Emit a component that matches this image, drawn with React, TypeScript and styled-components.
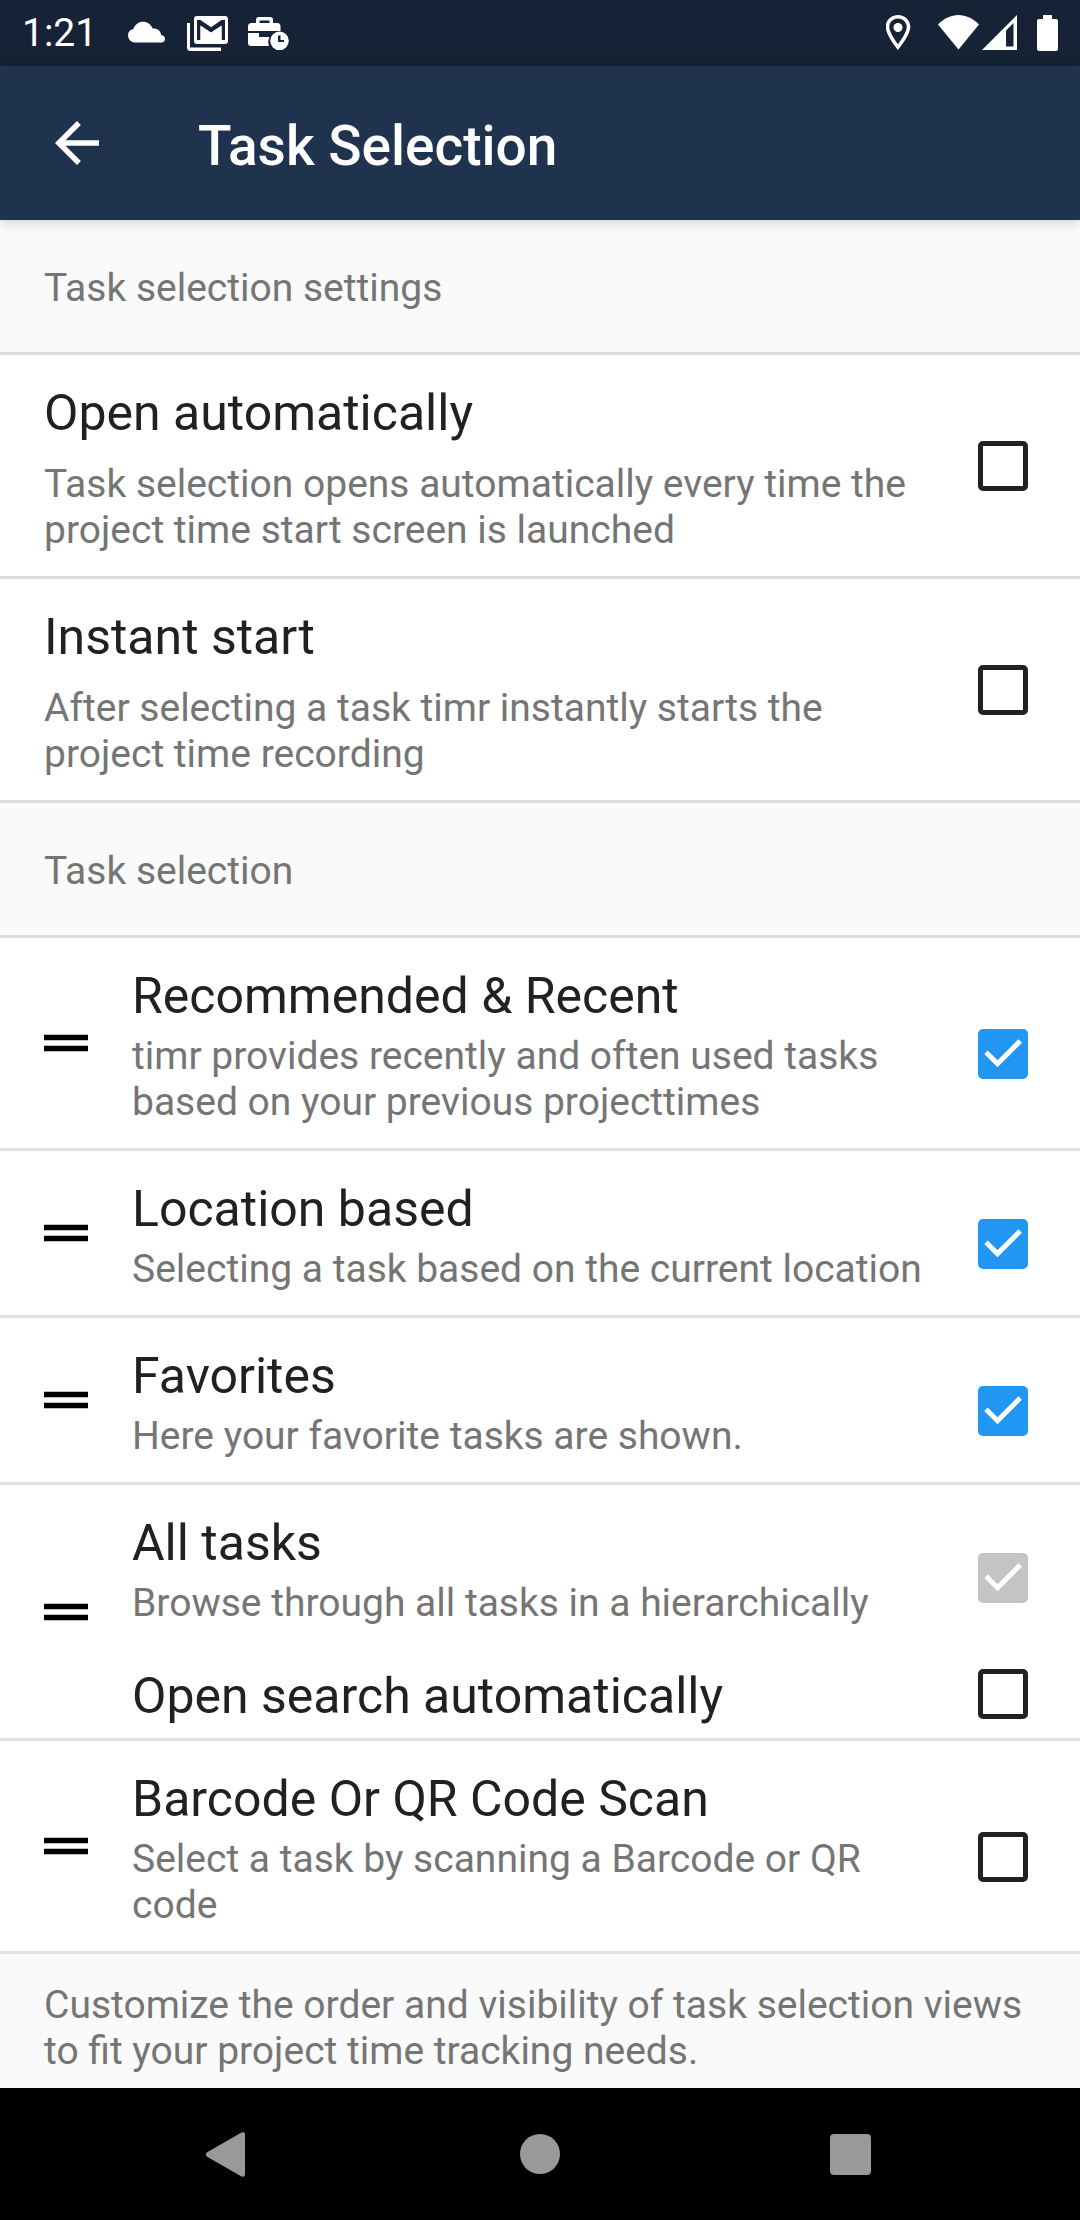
import React, { useState } from "react";
import styled, { createGlobalStyle, css } from "styled-components";

const GlobalStyle = createGlobalStyle`
  *, *::before, *::after { box-sizing: border-box; }
  body {
    margin: 0;
    background: #fafafa;
    font-family: Roboto, "Noto Sans", sans-serif;
    color: #212121;
  }
  h1, h2, p, ul { margin: 0; padding: 0; font-weight: 400; }
`;

const Screen = styled.div`
  display: flex;
  flex-direction: column;
  min-height: 100vh;
`;

const StatusBar = styled.div`
  display: flex;
  align-items: center;
  justify-content: space-between;
  height: 66px;
  padding: 0 22px;
  background: #162235;
  color: #fff;
`;

const IconGroup = styled.div<{ $gap: number }>`
  display: flex;
  align-items: center;
  gap: ${(p) => p.$gap}px;
`;

const Clock = styled.time`
  margin-right: 12px;
  font-size: 39px;
  line-height: 46px;
`;

const StatusSvg = styled.svg`
  display: block;
  height: 66px;
  fill: #fff;
`;

const AppBar = styled.header`
  position: relative;
  display: flex;
  align-items: center;
  gap: 88px;
  height: 154px;
  padding: 0 44px;
  background: #20334e;
  color: #fff;
  box-shadow: 0 2px 12px rgba(0, 0, 0, 0.18);
`;

const IconButton = styled.button`
  display: flex;
  align-items: center;
  justify-content: center;
  padding: 0;
  border: 0;
  background: none;
  color: inherit;
  cursor: pointer;
`;

const Icon = styled.svg`
  display: block;
  flex: none;
  width: 66px;
  height: 66px;
  fill: currentColor;
`;

const PageTitle = styled.h1`
  padding-top: 5px;
  font-size: 55px;
  line-height: 64px;
  && { font-weight: 500; }
`;

const Content = styled.main`
  flex: 1;
`;

const SectionTitle = styled.h2`
  padding: 45px 44px 41px;
  border-bottom: 3px solid #dcdcdc;
  font-size: 39px;
  line-height: 46px;
  color: #757575;
`;

const List = styled.ul`
  list-style: none;
  background: #fff;
`;

const Row = styled.li<{ $line: string }>`
  display: flex;
  align-items: center;
  padding-right: 33px;
  border-bottom: 3px solid ${(p) => p.$line};
`;

const Handle = styled(IconButton)`
  flex: none;
  padding: 0 33px;
  color: #000;
  cursor: grab;
`;

const Options = styled.div`
  flex: 1;
  min-width: 0;
`;

const Option = styled.div`
  display: flex;
  align-items: center;
`;

const Texts = styled.div<{ $inset?: boolean; $gap?: number; $compact?: boolean }>`
  display: flex;
  flex: 1;
  flex-direction: column;
  gap: ${(p) => p.$gap ?? 8}px;
  min-width: 0;
  padding: 29px 22px 23px 0;
  ${(p) => p.$inset && css`padding-left: 44px;`}
  ${(p) => p.$compact && css`padding-top: 18px; padding-bottom: 13px;`}
`;

const Title = styled.label`
  font-size: 50px;
  line-height: 58px;
`;

const Summary = styled.p`
  font-size: 39px;
  line-height: 46px;
  color: #757575;
`;

const CheckCell = styled.span<{ $lowered?: boolean }>`
  display: grid;
  flex: none;
  width: 88px;
  place-items: center;
  padding-top: ${(p) => (p.$lowered ? 22 : 0)}px;

  & > * { grid-area: 1 / 1; }
`;

const CheckInput = styled.input`
  appearance: none;
  width: 50px;
  height: 50px;
  margin: 0;
  border: 5px solid #212121;
  border-radius: 5px;
  background: #fff;

  &:checked {
    border-color: #2196f3;
    background: #2196f3;
  }
  &:checked:disabled {
    border-color: #c4c4c4;
    background: #c4c4c4;
  }
`;

const CheckMark = styled.svg`
  width: 50px;
  height: 50px;
  fill: none;
  stroke: #fff;
  stroke-width: 5;
  pointer-events: none;
`;

const Footnote = styled(Summary)`
  padding: 28px 44px 14px;
`;

const NavBar = styled.nav`
  display: grid;
  grid-template-columns: repeat(3, 1fr);
  height: 132px;
  padding: 0 75px;
  background: #000;
  color: #999;
`;

type CheckProps = {
  id: string;
  initial: boolean;
  disabled?: boolean;
  lowered?: boolean;
};

function Check({ id, initial, disabled, lowered }: CheckProps) {
  const [checked, setChecked] = useState(initial);
  return (
    <CheckCell $lowered={lowered}>
      <CheckInput
        type="checkbox"
        id={id}
        checked={checked}
        disabled={disabled}
        onChange={(e) => setChecked(e.target.checked)}
      />
      {checked && (
        <CheckMark viewBox="0 0 50 50" aria-hidden="true">
          <path d="M8 23.2 19.5 34.7 42.2 12" />
        </CheckMark>
      )}
    </CheckCell>
  );
}

const settings = [
  {
    id: "open-automatically",
    title: "Open automatically",
    summary:
      "Task selection opens automatically every time the project time start screen is launched",
  },
  {
    id: "instant-start",
    title: "Instant start",
    summary:
      "After selecting a task timr instantly starts the project time recording",
  },
];

type View = {
  id: string;
  title: string;
  summary: string;
  checked: boolean;
  disabled?: boolean;
  extra?: { id: string; title: string };
};

const views: View[] = [
  {
    id: "recent",
    title: "Recommended & Recent",
    summary:
      "timr provides recently and often used tasks based on your previous projecttimes",
    checked: true,
  },
  {
    id: "location",
    title: "Location based",
    summary: "Selecting a task based on the current location",
    checked: true,
  },
  {
    id: "favorites",
    title: "Favorites",
    summary: "Here your favorite tasks are shown.",
    checked: true,
  },
  {
    id: "all-tasks",
    title: "All tasks",
    summary: "Browse through all tasks in a hierarchically",
    checked: true,
    disabled: true,
    extra: { id: "open-search", title: "Open search automatically" },
  },
  {
    id: "barcode",
    title: "Barcode Or QR Code Scan",
    summary: "Select a task by scanning a Barcode or QR code",
    checked: false,
  },
];

function SystemStatus() {
  return (
    <StatusBar>
      <IconGroup $gap={18}>
        <Clock>1:21</Clock>
        <StatusSvg width="42" viewBox="0 0 42 66" aria-hidden="true">
          <path d="M8 42.5a7 7 0 0 1-7-7c0-3.600 2.600-6 5.400-6.500C8 24.500 11.800 21.800 16 21.800c4.200 0 8 2.700 9.600 6.700 4.700-.4 8.200 2.400 8.600 6.500 2.300.3 3.800 1.900 3.800 3.900 0 2.100-1.600 3.600-3.800 3.600z" />
        </StatusSvg>
        <StatusSvg width="42" viewBox="0 0 42 66" aria-hidden="true">
          <path d="M0 23h3v24.500h31V51H3.500A3.500 3.500 0 0 1 0 47.500z" />
          <path
            fillRule="evenodd"
            d="M10 16h28a3 3 0 0 1 3 3v22a3 3 0 0 1-3 3H10a3 3 0 0 1-3-3V19a3 3 0 0 1 3-3zm0 4v20h3.500V26L24 33l10.500-7v14H38V20h-3.500L24 27.200 13.500 20z"
          />
          <path d="M13.500 25.500 24 32.500l10.500-7V40h-21z" />
        </StatusSvg>
        <StatusSvg width="42" viewBox="0 0 42 66" aria-hidden="true">
          <path
            fillRule="evenodd"
            d="M12 17h11a3 3 0 0 1 3 3v3h4a3.500 3.500 0 0 1 3.500 3.500V31H1v-4.500A3.500 3.500 0 0 1 4.500 23H9v-3a3 3 0 0 1 3-3zm.500 3.500V23h10v-2.500z"
          />
          <path d="M1 33h11v4h10.500a11 11 0 0 0-.500 9H4a3 3 0 0 1-3-3z" />
          <path
            fillRule="evenodd"
            d="M32.500 31.500a9.300 9.300 0 1 1 0 18.600 9.300 9.300 0 0 1 0-18.600zm-1.500 4v6.500h6v-2h-3.500v-4.500z"
          />
        </StatusSvg>
      </IconGroup>
      <IconGroup $gap={18}>
        <IconGroup $gap={26}>
          <StatusSvg width="26" viewBox="0 0 26 66" aria-hidden="true">
            <path
              fillRule="evenodd"
              d="M12 15c6.900 0 12.300 5.300 12.300 12 0 8-12.300 23-12.300 23S-.300 35-.300 27C-.300 20.300 5.100 15 12 15zm0 3.600c-4.900 0-8.700 3.700-8.700 8.400 0 4.800 5.700 13.200 8.700 17.200 3-4 8.700-12.400 8.700-17.200 0-4.700-3.800-8.400-8.700-8.400z"
            />
            <circle cx="12" cy="27.500" r="4.500" />
          </StatusSvg>
          <IconGroup $gap={2}>
            <StatusSvg width="42" viewBox="0 0 42 66" aria-hidden="true">
              <path d="M0 24.500C6 18.500 13 15 20.500 15S35 18.500 41 24.500L20.500 49.500z" />
            </StatusSvg>
            <StatusSvg width="36" viewBox="0 0 36 66" aria-hidden="true">
              <path fillRule="evenodd" d="M0 50 35 15v35zM24 30.500V46.500h7.500V23z" />
            </StatusSvg>
          </IconGroup>
        </IconGroup>
        <StatusSvg width="22" viewBox="0 0 22 66" aria-hidden="true">
          <path d="M7 15h9v4h4a2 2 0 0 1 2 2v28a2 2 0 0 1-2 2H3a2 2 0 0 1-2-2V21a2 2 0 0 1 2-2h4z" />
        </StatusSvg>
      </IconGroup>
    </StatusBar>
  );
}

export default function App() {
  return (
    <Screen>
      <GlobalStyle />
      <SystemStatus />
      <AppBar>
        <IconButton type="button" aria-label="Navigate up">
          <Icon viewBox="0 0 24 24" aria-hidden="true">
            <path d="M20 11H7.830l5.590-5.590L12 4l-8 8 8 8 1.410-1.410L7.830 13H20v-2z" />
          </Icon>
        </IconButton>
        <PageTitle>Task Selection</PageTitle>
      </AppBar>

      <Content>
        <SectionTitle>Task selection settings</SectionTitle>
        <List>
          {settings.map((s) => (
            <Row key={s.id} $line="#dcdcdc">
              <Options>
                <Option>
                  <Texts $inset $gap={19}>
                    <Title htmlFor={s.id}>{s.title}</Title>
                    <Summary>{s.summary}</Summary>
                  </Texts>
                  <Check id={s.id} initial={false} />
                </Option>
              </Options>
            </Row>
          ))}
        </List>

        <SectionTitle>Task selection</SectionTitle>
        <List>
          {views.map((v) => (
            <Row key={v.id} $line="#e0e0e0">
              <Handle type="button" aria-label={`Reorder ${v.title}`}>
                <Icon viewBox="0 0 24 24" aria-hidden="true">
                  <path d="M20 9H4v2h16V9zM4 15h16v-2H4v2z" />
                </Icon>
              </Handle>
              <Options>
                <Option>
                  <Texts>
                    <Title htmlFor={v.id}>{v.title}</Title>
                    <Summary>{v.summary}</Summary>
                  </Texts>
                  <Check id={v.id} initial={v.checked} disabled={v.disabled} lowered />
                </Option>
                {v.extra && (
                  <Option>
                    <Texts $compact>
                      <Title htmlFor={v.extra.id}>{v.extra.title}</Title>
                    </Texts>
                    <Check id={v.extra.id} initial={false} />
                  </Option>
                )}
              </Options>
            </Row>
          ))}
        </List>
        <Footnote>
          Customize the order and visibility of task selection views to fit your
          project time tracking needs.
        </Footnote>
      </Content>

      <NavBar aria-label="System navigation">
        <IconButton type="button" aria-label="Back">
          <Icon viewBox="0 0 66 66" aria-hidden="true">
            <path d="M10.500 31 44.500 11.600Q48 10 48 14v39q0 4-3.500 2.400L10.500 36Q7 33.500 10.500 31z" />
          </Icon>
        </IconButton>
        <IconButton type="button" aria-label="Home">
          <Icon viewBox="0 0 66 66" aria-hidden="true">
            <circle cx="33" cy="33" r="20" />
          </Icon>
        </IconButton>
        <IconButton type="button" aria-label="Recent apps">
          <Icon viewBox="0 0 66 66" aria-hidden="true">
            <rect x="13" y="13" width="41" height="41" rx="4" />
          </Icon>
        </IconButton>
      </NavBar>
    </Screen>
  );
}
